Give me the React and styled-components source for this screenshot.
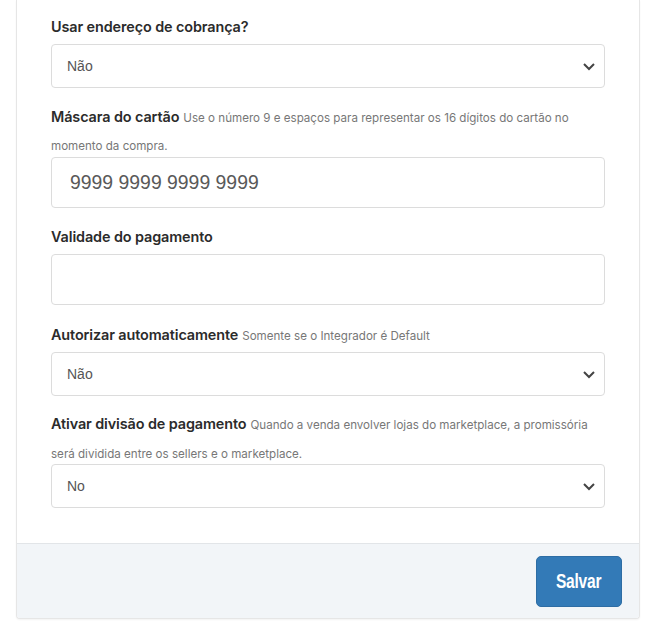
import React from 'react';
import styled, { createGlobalStyle } from 'styled-components';

const GlobalStyle = createGlobalStyle`
  body {
    margin: 0;
    background: #fff;
    font-family: Inter, "Noto Sans", sans-serif;
  }
`;

const Page = styled.div`
  width: 655px;
  height: 632px;
  padding: 0 15px 0 16px;
  box-sizing: border-box;
`;

const Card = styled.div`
  border: 1px solid #e6e6e6;
  border-top: none;
  border-radius: 0 0 4px 4px;
  box-shadow: 0 1px 2px rgba(0, 0, 0, 0.05);
  background: #fff;
  overflow: hidden;
`;

const Body = styled.div`
  padding: 12px 34px 20px 34px;
`;

const Group = styled.div`
  margin-bottom: 14.5px;
`;

const Label = styled.div`
  font-size: 14.4px;
  font-weight: 600;
  color: #2b2b2b;
  line-height: ${p => (p.$wrapped ? '28.5px' : '29px')};
  margin-bottom: ${p => (p.$wrapped ? '-3px' : '3px')};
  letter-spacing: -0.1px;
`;

const Hint = styled.span`
  font-size: 11.6px;
  font-weight: 400;
  line-height: 1;
  color: #777;
  margin-left: 4px;
  letter-spacing: 0;
`;

const SelectBox = styled.div`
  height: 44px;
  box-sizing: border-box;
  border: 1px solid #dcdcdc;
  border-radius: 4px;
  display: flex;
  align-items: center;
  justify-content: space-between;
  padding: 0 8px 0 15px;
  font-family: "Liberation Sans", Arial, sans-serif;
  font-size: 14px;
  color: #555;
`;

const Chevron = () => (
  <svg width="14" height="10" viewBox="0 0 14 10">
    <path d="M2 3 L7 8 L12 3" fill="none" stroke="#444" strokeWidth="2" />
  </svg>
);

const InputBox = styled.div`
  height: 51px;
  box-sizing: border-box;
  border: 1px solid #dcdcdc;
  border-radius: 4px;
  display: flex;
  align-items: center;
  padding: 0 18px;
  font-family: "Liberation Sans", Arial, sans-serif;
  font-size: 19.4px;
  color: #595959;
`;

const Footer = styled.div`
  background: #f2f5f8;
  border-top: 1px solid #e2e5e8;
  padding: 12px 17px 11px 0;
  display: flex;
  justify-content: flex-end;
`;

const Button = styled.button`
  width: 86px;
  height: 51px;
  background: #337ab7;
  border: 1px solid #2e6da4;
  border-radius: 5px;
  color: #fff;
  padding: 0;
  display: flex;
  align-items: center;
  justify-content: center;
`;

const Narrow = styled.span`
  display: inline-block;
  font-family: "Liberation Sans", Arial, sans-serif;
  font-weight: 700;
  font-size: 21px;
  transform: scaleX(0.74);
  letter-spacing: -0.3px;
`;

const Select = ({ value }) => (
  <SelectBox>
    <span>{value}</span>
    <Chevron />
  </SelectBox>
);

export default function App() {
  return (
    <Page>
      <GlobalStyle />
      <Card>
        <Body>
          <Group>
            <Label>Usar endereço de cobrança?</Label>
            <Select value="Não" />
          </Group>
          <Group>
            <Label $wrapped>
              Máscara do cartão
              <Hint>Use o número 9 e espaços para representar os 16 dígitos do cartão no momento da compra.</Hint>
            </Label>
            <InputBox>9999 9999 9999 9999</InputBox>
          </Group>
          <Group>
            <Label>Validade do pagamento</Label>
            <InputBox />
          </Group>
          <Group>
            <Label>
              Autorizar automaticamente
              <Hint>Somente se o Integrador é Default</Hint>
            </Label>
            <Select value="Não" />
          </Group>
          <Group>
            <Label $wrapped>
              Ativar divisão de pagamento
              <Hint>Quando a venda envolver lojas do marketplace, a promissória será dividida entre os sellers e o marketplace.</Hint>
            </Label>
            <Select value="No" />
          </Group>
        </Body>
        <Footer>
          <Button>
            <Narrow>Salvar</Narrow>
          </Button>
        </Footer>
      </Card>
    </Page>
  );
}
